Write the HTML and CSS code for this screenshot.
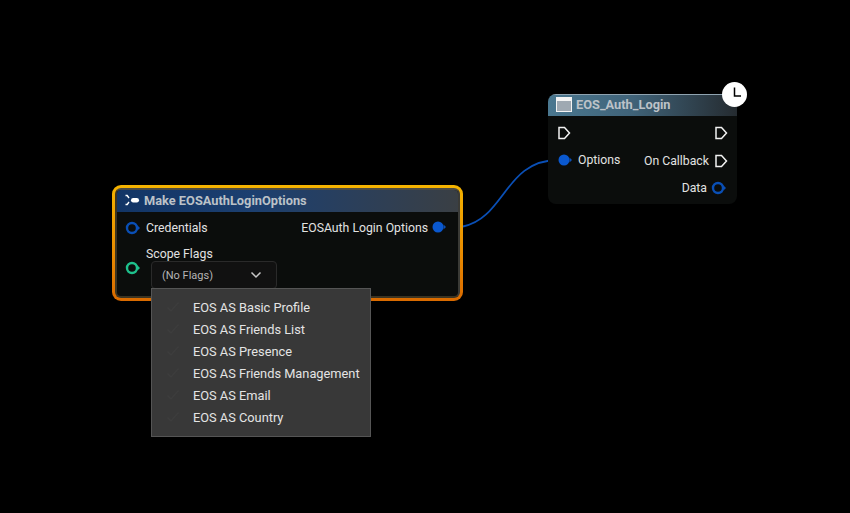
FILE: index.html
```html
<!DOCTYPE html>
<html lang="en">
<head>
<meta charset="utf-8">
<title>Blueprint graph</title>
<link rel="stylesheet" href="styles.css">
</head>
<body>
<main class="graph">
  <svg class="wires" width="850" height="513" viewBox="0 0 850 513" aria-hidden="true">
    <path class="wire-dim" d="M444 227H463"/>
    <path class="wire" d="M463 226.500C505 218 505 160 558 160"/>
  </svg>

  <section class="selection">
    <div class="node node-make">
      <header class="title title-blue">
        <svg class="make-icon" width="18" height="14" viewBox="0 0 18 14" aria-hidden="true">
          <path d="M3.500 2.500H5.200L7 5" class="make-stroke"/>
          <path d="M3.500 11.500H5.200L7 9" class="make-stroke"/>
          <rect x="9" y="5" width="8" height="4.400" rx="2.200" fill="#fff"/>
        </svg>
        <span>Make EOSAuthLoginOptions</span>
      </header>
      <div class="make-body">
        <div class="make-inputs">
          <div class="pin-row">
            <svg class="pin" width="16" height="14" viewBox="0 0 16 14" aria-hidden="true"><circle cx="7" cy="7" r="5" class="ring ring-blue"/><path d="M12.500 4.500L15 7L12.500 9.500Z" class="tip-blue"/></svg>
            <span>Credentials</span>
          </div>
          <div class="flags-row">
            <svg class="pin" width="16" height="14" viewBox="0 0 16 14" aria-hidden="true"><circle cx="7" cy="7" r="5" class="ring ring-green"/><path d="M12.500 4.500L15 7L12.500 9.500Z" class="tip-green"/></svg>
            <div class="flags-field">
              <span class="flags-label">Scope Flags</span>
              <div class="combo">
                <span>(No Flags)</span>
                <svg width="12" height="8" viewBox="0 0 12 8" aria-hidden="true"><path d="M1.500 1.500L6 6L10.500 1.500" class="chevron"/></svg>
              </div>
            </div>
          </div>
        </div>
        <div class="pin-row make-output">
          <span>EOSAuth Login Options</span>
          <svg class="pin output-pin" width="16" height="14" viewBox="0 0 16 14" aria-hidden="true"><circle cx="6" cy="7" r="5.500" class="dot-blue"/><path d="M11.500 4.500L14 7L11.500 9.500Z" class="tip-blue"/></svg>
        </div>
      </div>
    </div>
  </section>

  <section class="node node-login">
    <header class="title title-slate">
      <span class="window-icon"></span>
      <span>EOS_Auth_Login</span>
    </header>
    <div class="login-body">
      <div class="login-row">
        <svg class="exec" width="13" height="14" viewBox="0 0 13 14" aria-hidden="true"><path d="M1 1.500H6.500L11.500 7L6.500 12.500H1Z" class="exec-path"/></svg>
        <svg class="exec" width="13" height="14" viewBox="0 0 13 14" aria-hidden="true"><path d="M1 1.500H6.500L11.500 7L6.500 12.500H1Z" class="exec-path"/></svg>
      </div>
      <div class="login-row">
        <div class="pin-row option-pin">
          <svg class="pin" width="16" height="14" viewBox="0 0 16 14" aria-hidden="true"><circle cx="6" cy="7" r="5.500" class="dot-blue"/><path d="M11.500 4.500L14 7L11.500 9.500Z" class="tip-blue"/></svg>
          <span>Options</span>
        </div>
        <div class="pin-row callback-pin">
          <span>On Callback</span>
          <svg class="exec" width="13" height="14" viewBox="0 0 13 14" aria-hidden="true"><path d="M1 1.500H6.500L11.500 7L6.500 12.500H1Z" class="exec-path"/></svg>
        </div>
      </div>
      <div class="login-row login-end">
        <div class="pin-row data-pin">
          <span>Data</span>
          <svg class="pin" width="16" height="14" viewBox="0 0 16 14" aria-hidden="true"><circle cx="7" cy="7" r="5" class="ring ring-blue"/><path d="M12.500 4.500L15 7L12.500 9.500Z" class="tip-blue"/></svg>
        </div>
      </div>
    </div>
  </section>

  <div class="clock">
    <svg width="26" height="26" viewBox="0 0 26 26" aria-hidden="true"><path d="M12.500 5.500V14H19" class="clock-hands"/></svg>
  </div>

  <ul class="menu">
    <li><svg class="check" width="14" height="12" viewBox="0 0 14 12" aria-hidden="true"><path d="M1.500 6.500L5 10L12.500 1.500"/></svg>EOS AS Basic Profile</li>
    <li><svg class="check" width="14" height="12" viewBox="0 0 14 12" aria-hidden="true"><path d="M1.500 6.500L5 10L12.500 1.500"/></svg>EOS AS Friends List</li>
    <li><svg class="check" width="14" height="12" viewBox="0 0 14 12" aria-hidden="true"><path d="M1.500 6.500L5 10L12.500 1.500"/></svg>EOS AS Presence</li>
    <li><svg class="check" width="14" height="12" viewBox="0 0 14 12" aria-hidden="true"><path d="M1.500 6.500L5 10L12.500 1.500"/></svg>EOS AS Friends Management</li>
    <li><svg class="check" width="14" height="12" viewBox="0 0 14 12" aria-hidden="true"><path d="M1.500 6.500L5 10L12.500 1.500"/></svg>EOS AS Email</li>
    <li><svg class="check" width="14" height="12" viewBox="0 0 14 12" aria-hidden="true"><path d="M1.500 6.500L5 10L12.500 1.500"/></svg>EOS AS Country</li>
  </ul>
</main>
</body>
</html>
```
FILE: styles.css
```css
html, body {
  margin: 0;
  padding: 0;
  background: #000;
}

.graph {
  position: relative;
  width: 850px;
  height: 513px;
  overflow: hidden;
  background: #000;
  font-family: Roboto, "Liberation Sans", sans-serif;
  font-size: 12.250px;
  color: #e2e2e2;
}

.wires {
  position: absolute;
  left: 0;
  top: 0;
}

.wire {
  fill: none;
  stroke: #0a4fb5;
  stroke-width: 1.800;
}

.wire-dim {
  fill: none;
  stroke: #06284f;
  stroke-width: 1.500;
}

.selection {
  position: absolute;
  left: 112px;
  top: 185px;
  width: 351px;
  height: 116px;
  box-sizing: border-box;
  padding: 3px;
  border-radius: 9px;
  background: linear-gradient(180deg, #f5b400 0%, #e88a00 60%, #d96a00 100%);
}

.node {
  box-sizing: border-box;
  display: flex;
  flex-direction: column;
  overflow: hidden;
  background: #0b0d0c;
}

.node-make {
  width: 345px;
  height: 110px;
  border-radius: 6px;
  border: 2px solid #3c3422;
  border-top-color: #4a4a44;
  border-right-color: #3a3a36;
}

.node-login {
  position: absolute;
  left: 548px;
  top: 94px;
  width: 189px;
  height: 110px;
  border-radius: 8px;
}

.title {
  box-sizing: border-box;
  display: flex;
  align-items: center;
  flex: none;
  font-size: 12.800px;
  font-weight: 700;
  color: #bcc2c8;
}

.title-blue {
  height: 22px;
  gap: 4px;
  padding: 0 0 2px 5px;
  background: linear-gradient(90deg, #123566 0%, #1c3f70 40%, #3a3f44 100%);
}

.title-slate {
  height: 22px;
  gap: 4px;
  padding: 0 0 2px 8px;
  border-top: 1px solid #8fa3b0;
  background: linear-gradient(90deg, #4b7890 0%, #3f6278 45%, #252b30 100%);
}

.make-icon {
  flex: none;
}

.make-stroke {
  fill: none;
  stroke: #fff;
  stroke-width: 1.400;
}

.window-icon {
  box-sizing: border-box;
  flex: none;
  width: 16px;
  height: 15px;
  border: 1px solid #f4f4f4;
  border-top-width: 4px;
  background: #9fa9b2;
}

.make-body {
  display: flex;
  justify-content: space-between;
  align-items: flex-start;
  flex: 1;
  padding: 9px 10px 0 8px;
}

.make-inputs {
  display: flex;
  flex-direction: column;
  gap: 12px;
}

.pin-row {
  display: flex;
  align-items: center;
  gap: 5px;
  height: 14px;
}

.pin {
  flex: none;
}

.make-output {
  gap: 4px;
}

.output-pin {
  margin-top: -2px;
}

.flags-row {
  display: flex;
  align-items: flex-start;
  gap: 5px;
}

.flags-row .pin {
  margin-top: 14px;
}

.flags-field {
  display: flex;
  flex-direction: column;
}

.flags-label {
  line-height: 14px;
}

.combo {
  box-sizing: border-box;
  display: flex;
  align-items: center;
  justify-content: space-between;
  width: 126px;
  height: 28px;
  margin-left: 5px;
  padding: 0 14px 0 10px;
  border: 1px solid #2a2a2a;
  border-radius: 4px;
  background: #111;
  font-size: 11px;
  color: #b5b5b5;
}

.ring {
  fill: none;
  stroke-width: 2.400;
}

.ring-blue {
  stroke: #0a4fb5;
}

.ring-green {
  stroke: #1ec08c;
}

.tip-blue {
  fill: #0a4fb5;
}

.tip-green {
  fill: #1ec08c;
}

.dot-blue {
  fill: #0a58cf;
}

.chevron {
  fill: none;
  stroke: #c8c8c8;
  stroke-width: 1.500;
}

.login-body {
  display: flex;
  flex-direction: column;
  gap: 13px;
  padding: 10px 9px 0 10px;
}

.login-row {
  display: flex;
  justify-content: space-between;
  align-items: center;
  height: 14px;
}

.option-pin {
  gap: 4px;
}

.callback-pin {
  gap: 6px;
  margin-top: 1px;
}

.data-pin {
  gap: 4px;
  margin-top: 1px;
}

.login-end {
  justify-content: flex-end;
  margin-right: 1px;
}

.exec {
  flex: none;
}

.exec-path {
  fill: none;
  stroke: #f2f2f2;
  stroke-width: 1.500;
}

.clock {
  position: absolute;
  left: 722px;
  top: 82px;
  width: 25px;
  height: 25px;
  border-radius: 50%;
  background: #fff;
}

.clock svg {
  display: block;
}

.clock-hands {
  fill: none;
  stroke: #000;
  stroke-width: 1.500;
}

.menu {
  position: absolute;
  left: 151px;
  top: 288px;
  box-sizing: border-box;
  width: 220px;
  height: 149px;
  margin: 0;
  padding: 7px 0 0;
  list-style: none;
  border: 1px solid #555;
  background: #383838;
}

.menu li {
  display: flex;
  align-items: center;
  height: 22px;
  padding-left: 14px;
  gap: 13px;
  font-size: 12.800px;
  color: #e4e4e4;
}

.check {
  flex: none;
  fill: none;
  stroke: #3d3d3d;
  stroke-width: 1.500;
}
```
